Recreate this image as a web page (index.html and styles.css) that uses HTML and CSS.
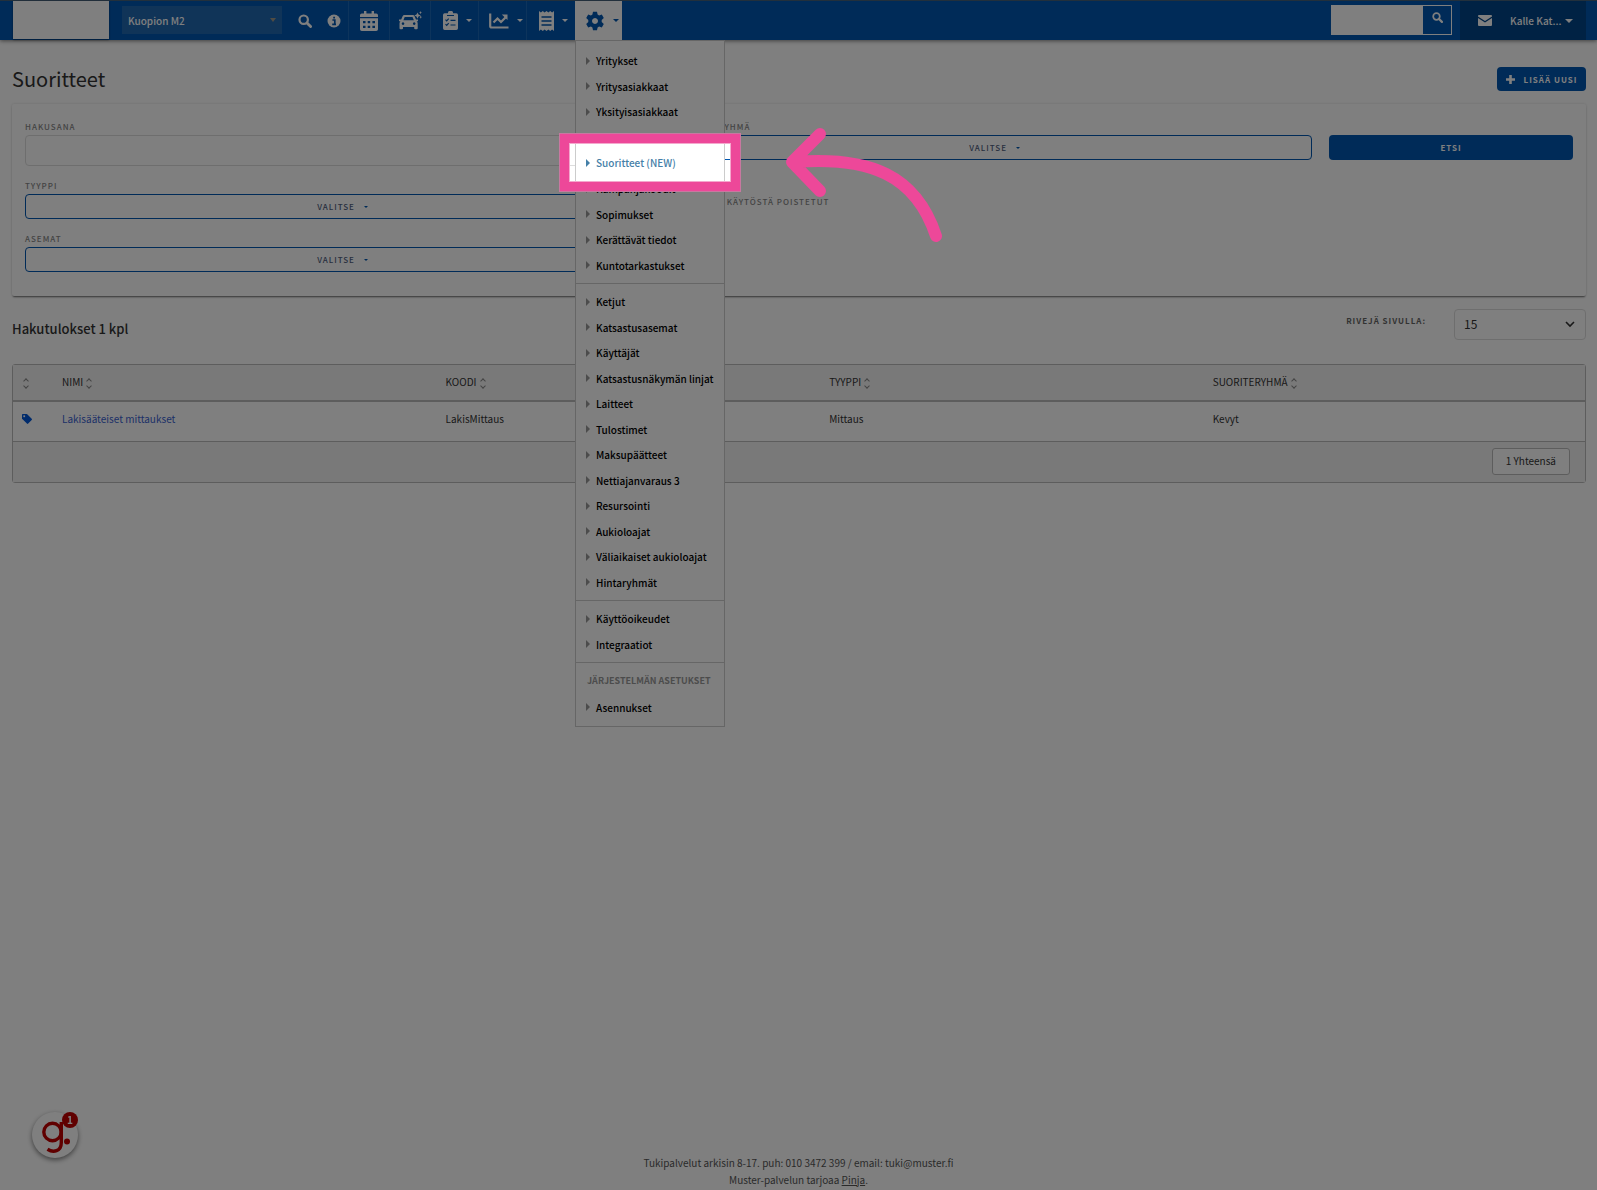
FILE: index.html
```html
<!DOCTYPE html>
<html lang="fi">
<head>
<meta charset="utf-8">
<meta name="viewport" content="width=device-width, initial-scale=1">
<title>Suoritteet</title>
<link rel="stylesheet" href="styles.css">
</head>
<body>
<header class="navbar">
  <a class="logo" href="#" aria-label="Etusivu"></a>
  <button class="station" type="button">Kuopion M2 <span class="caret caret-grey"></span></button>
  <nav class="nav">
    <a class="nav-plain" href="#" aria-label="Haku"><svg width="14" height="14" viewBox="0 0 14 14"><circle cx="5.7" cy="5.7" r="4.2" fill="none" stroke="currentColor" stroke-width="2.2"/><path d="M9 9l3.6 3.6" stroke="currentColor" stroke-width="2.8" stroke-linecap="round"/></svg></a>
    <a class="nav-plain" href="#" aria-label="Tietoja"><svg width="14" height="14" viewBox="0 0 14 14"><circle cx="7" cy="7" r="6.5" fill="currentColor"/><path d="M5.4 6h2.400v4M5.200 10.300h3.800M6.200 3.600h1.800" fill="none" stroke="#0056b0" stroke-width="1.700"/></svg></a>
    <a class="nav-item" href="#" aria-label="Kalenteri"><svg width="18" height="20" viewBox="0 0 18 20"><path fill="currentColor" fill-rule="evenodd" d="M4 0h2.4v2.4h5.2V0H14v2.4h2.200a1.800 1.800 0 0 1 1.800 1.800V6H0V4.200a1.800 1.800 0 0 1 1.800-1.800H4zM0 7.300h18v10.900a1.800 1.800 0 0 1-1.800 1.800H1.800A1.800 1.800 0 0 1 0 18.200zM3 10v2.300h2.500V10zm4.700 0v2.300h2.500V10zm4.700 0v2.300H15V10zM3 14.700V17h2.500v-2.300zm4.700 0V17h2.500v-2.300zm4.700 0V17H15v-2.300z"/></svg></a>
    <a class="nav-item" href="#" aria-label="Ajoneuvot"><svg width="23" height="20" viewBox="0 0 23 20"><path fill="currentColor" fill-rule="evenodd" d="M5.500 4h8.200a2 2 0 0 1 1.900 1.300L17 8.600h2v1.600h-1.300a3 3 0 0 1 1 2.300v4.800a1 1 0 0 1-1 1h-1.500a1 1 0 0 1-1-1V16H4v1.300a1 1 0 0 1-1 1H1.500a1 1 0 0 1-1-1v-4.800a3 3 0 0 1 1-2.300H0V8.600h2.200l1.400-3.300A2 2 0 0 1 5.500 4zm.2 1.900L4.400 9.300h10.500l-1.400-3.400zM4 11.300a1.300 1.300 0 1 0 .01 0zm11.200 0a1.300 1.300 0 1 0 .01 0z"/><path d="M18.500 1.400l1 2.200 2.200 1-2.200 1-1 2.200-1-2.200-2.200-1 2.200-1zM21.500 0l.5 1.200 1 .4-1 .400-.5 1.200-.5-1.200-1-.4 1-.4zM21.700 4.500l.5 1.200.8.400-.8.400-.5 1.200-.5-1.200-.9-.4.900-.4z" fill="currentColor"/></svg></a>
    <button class="nav-item wide" type="button" aria-label="Tehtävät"><svg width="15" height="19" viewBox="0 0 15 19"><path fill="currentColor" d="M1.700 2.300h3.200a2.600 2.600 0 0 1 5.200 0h3.200A1.700 1.700 0 0 1 15 4v13.300a1.700 1.700 0 0 1-1.700 1.700H1.700A1.700 1.700 0 0 1 0 17.300V4a1.700 1.700 0 0 1 1.700-1.700z"/><path d="M4 4.500h7M2.500 8.700l1.200 1.200 2-2.200M2.500 13.200l1.200 1.200 2-2.200M7.500 9.300h5M7.500 14h5" fill="none" stroke="#0056b0" stroke-width="1.200"/></svg><span class="caret"></span></button>
    <button class="nav-item wide" type="button" aria-label="Raportit"><svg width="20" height="16" viewBox="0 0 20 16"><path d="M1.200 0.500v12.700a1.300 1.300 0 0 0 1.300 1.300H19.500" fill="none" stroke="currentColor" stroke-width="2.200"/><path d="M4.500 9.500l4-4 3.500 3.500 4.500-4.500" fill="none" stroke="currentColor" stroke-width="2.200"/><path d="M12.800 1.400h5.700v5.700z" fill="currentColor"/></svg><span class="caret"></span></button>
    <button class="nav-item wide" type="button" aria-label="Kuitit"><svg width="15" height="20" viewBox="0 0 15 20"><path fill="currentColor" d="M0 0l1.900 1.500L3.800 0l1.800 1.500L7.500 0l1.900 1.500L11.200 0l1.900 1.500L15 0v20l-1.900-1.500-1.900 1.500-1.800-1.500L7.500 20l-1.900-1.500L3.800 20l-1.900-1.500L0 20z"/><path d="M2.500 6h10M2.500 10h10M2.500 14h10" stroke="#0056b0" stroke-width="1.300"/></svg><span class="caret"></span></button>
    <div class="nav-open">
      <button class="nav-item wide active" type="button" aria-label="Asetukset" aria-expanded="true"><svg width="20" height="20" viewBox="0 0 20 20"><path fill="currentColor" fill-rule="evenodd" d="M8 .8h4l.6 2.700 1.500.9 2.700-.9 2 3.500-2.100 1.900v2.200l2.100 1.900-2 3.500-2.700-.9-1.500.9-.6 2.700H8l-.6-2.700-1.500-.9-2.700.9-2-3.500 2.100-1.900V8.900L1.200 7l2-3.500 2.700.9 1.500-.9zM10 7a3 3 0 1 0 .01 0z"/></svg><span class="caret"></span></button>
      <div class="menu">
        <ul class="menu-list nine">
          <li><a href="#">Yritykset</a></li>
          <li><a href="#">Yritysasiakkaat</a></li>
          <li><a href="#">Yksityisasiakkaat</a></li>
          <li><a href="#">Alennushinnastot</a></li>
          <li><a class="current" href="#">Suoritteet (NEW)</a></li>
          <li><a href="#">Kampanjakoodit</a></li>
          <li><a href="#">Sopimukset</a></li>
          <li><a href="#">Kerättävät tiedot</a></li>
          <li><a href="#">Kuntotarkastukset</a></li>
        </ul>
        <ul class="menu-list twelve">
          <li><a href="#">Ketjut</a></li>
          <li><a href="#">Katsastusasemat</a></li>
          <li><a href="#">Käyttäjät</a></li>
          <li><a href="#">Katsastusnäkymän linjat</a></li>
          <li><a href="#">Laitteet</a></li>
          <li><a href="#">Tulostimet</a></li>
          <li><a href="#">Maksupäätteet</a></li>
          <li><a href="#">Nettiajanvaraus 3</a></li>
          <li><a href="#">Resursointi</a></li>
          <li><a href="#">Aukioloajat</a></li>
          <li><a href="#">Väliaikaiset aukioloajat</a></li>
          <li><a href="#">Hintaryhmät</a></li>
        </ul>
        <ul class="menu-list two">
          <li><a href="#">Käyttöoikeudet</a></li>
          <li><a href="#">Integraatiot</a></li>
        </ul>
        <h2 class="menu-title">Järjestelmän asetukset</h2>
        <ul class="menu-list one">
          <li><a href="#">Asennukset</a></li>
        </ul>
      </div>
    </div>
  </nav>
  <form class="quick">
    <input type="text" aria-label="Pikahaku">
    <button type="button" aria-label="Hae"><svg width="11" height="11" viewBox="0 0 14 14"><circle cx="5.700" cy="5.700" r="4.200" fill="none" stroke="currentColor" stroke-width="2.200"/><path d="M9 9l3.600 3.600" stroke="currentColor" stroke-width="2.800" stroke-linecap="round"/></svg></button>
  </form>
  <div class="user">
    <svg width="14" height="11" viewBox="0 0 14 11"><path fill="currentColor" d="M1 0h12a1 1 0 0 1 1 1v.6L7 6 0 1.600V1a1 1 0 0 1 1-1zM0 3l7 4.400L14 3v7a1 1 0 0 1-1 1H1a1 1 0 0 1-1-1z"/></svg>
    <button type="button">Kalle Kat... <span class="caret caret-big"></span></button>
  </div>
</header>

<main class="page">
  <div class="heading">
    <h1>Suoritteet</h1>
    <button class="btn add" type="button"><svg width="9" height="9" viewBox="0 0 9 9"><path d="M4.500 0v9M0 4.500h9" stroke="currentColor" stroke-width="2.600"/></svg>Lisää uusi</button>
  </div>

  <form class="filters">
    <div class="field span5"><label for="q">Hakusana</label><input id="q" type="text"></div>
    <div class="field span5"><label for="group">Suoriteryhmä</label><button class="pick" id="group" type="button">Valitse <span class="caret"></span></button></div>
    <div class="field span2"><button class="btn search" type="button">Etsi</button></div>
    <div class="field span5"><label for="type">Tyyppi</label><button class="pick" id="type" type="button">Valitse <span class="caret"></span></button></div>
    <div class="field span5"><label class="removed"><input type="checkbox">Myös käytöstä poistetut</label></div>
    <div class="field span5 first"><label for="stations">Asemat</label><button class="pick" id="stations" type="button">Valitse <span class="caret"></span></button></div>
  </form>

  <div class="results-bar">
    <h2>Hakutulokset 1 kpl</h2>
    <label for="rows">Rivejä sivulla:</label>
    <div class="select"><select id="rows"><option>15</option></select><svg width="10" height="7" viewBox="0 0 10 7"><path d="M1 1l4 4 4-4" fill="none" stroke="currentColor" stroke-width="1.600"/></svg></div>
  </div>

  <div class="grid">
    <table>
      <thead><tr>
        <th class="narrow"><span class="sort"></span></th><th class="col">Nimi <span class="sort"></span></th><th class="col">Koodi <span class="sort"></span></th><th class="col">Tyyppi <span class="sort"></span></th><th>Suoriteryhmä <span class="sort"></span></th>
      </tr></thead>
      <tbody><tr>
        <td class="narrow"><svg width="10" height="10" viewBox="0 0 10 10"><path fill="#0057d8" fill-rule="evenodd" d="M.8 0h3.700a1 1 0 0 1 .7.300l4.500 4.500a1 1 0 0 1 0 1.300L6.200 9.600a1 1 0 0 1-1.300 0L.3 5.100A1 1 0 0 1 0 4.400V.8A.8.800 0 0 1 .8 0zM2.200 1.300a.9.900 0 1 0 .01 0z"/></svg></td>
        <td><a href="#">Lakisääteiset mittaukset</a></td><td>LakisMittaus</td><td>Mittaus</td><td>Kevyt</td>
      </tr></tbody>
    </table>
    <div class="total"><span>1 Yhteensä</span></div>
  </div>
</main>

<footer class="footer">
  <p>Tukipalvelut arkisin 8-17. puh: 010 3472 399 / email: tuki@muster.fi</p>
  <p>Muster-palvelun tarjoaa <a href="#">Pinja</a>.</p>
</footer>

<button class="chat" type="button" aria-label="Ohje"><svg width="30" height="34" viewBox="0 0 30 34"><circle cx="10.500" cy="11" r="8.700" fill="none" stroke="currentColor" stroke-width="3.400"/><path d="M19.300 1v20.500c0 9-8 10.500-13.800 6.800" fill="none" stroke="currentColor" stroke-width="3.400"/><circle cx="25" cy="20.500" r="3" fill="currentColor"/></svg><span>1</span></button>

<div class="spotlight"></div>
<svg class="arrow" width="160" height="120" viewBox="0 0 160 120"><path d="M34 9L6 37l28 29M8 37C84 31 130 50 150 111" fill="none" stroke="#ed4899" stroke-width="12" stroke-linecap="round" stroke-linejoin="round"/></svg>
</body>
</html>
```
FILE: styles.css
```css
* { box-sizing: border-box; }

body {
  margin: 0;
  min-height: 100vh;
  display: flex;
  flex-direction: column;
  background: #fff;
  color: #333;
  font-family: "Noto Sans CJK SC", "Noto Sans", sans-serif;
  font-size: 10px;
  line-height: 17px;
  overflow-x: hidden;
}

button, input, select { font: inherit; color: inherit; margin: 0; padding: 0; border: 0; background: none; }
a { color: inherit; text-decoration: none; }
h1, h2, p, ul { margin: 0; padding: 0; }
ul { list-style: none; }
svg { display: block; flex: none; }

.caret {
  display: inline-block;
  border: 3px solid transparent;
  border-top-color: currentColor;
  border-bottom: 0;
}
.caret-grey { border-width: 4px 3px 0; color: #a09888; }
.caret-big { border-width: 4px 4px 0; vertical-align: middle; }

/* top bar */
.navbar {
  display: flex;
  height: 40px;
  padding: 0 11px 0 13px;
  border-top: 1px solid #456078;
  background: #0056b0;
  color: #fff;
  box-shadow: 0 1px 4px rgba(0, 0, 0, .5);
}
.logo { width: 96px; height: 38px; background: #fff; box-shadow: 0 1px 2px rgba(0, 0, 0, .4); }
.station {
  display: flex;
  align-items: center;
  justify-content: space-between;
  width: 160px;
  height: 28px;
  margin: 5px 0 0 13px;
  padding: 0 6px;
  background: #2068b0;
  font-weight: 500;
}
.nav { display: flex; margin-left: 8px; }
.nav-plain { display: flex; align-items: center; justify-content: center; width: 29px; }
.nav-item {
  display: flex;
  align-items: center;
  justify-content: center;
  width: 41px;
  height: 39px;
  border-left: 1px solid #1a68b8;
}
.wide { width: 48px; gap: 8px; padding-left: 6px; }
.nav-open { position: relative; margin-left: 1px; }
.active { width: 47px; background: #fff; color: #0056b0; border-left: 0; }

.menu {
  position: absolute;
  top: 39px;
  left: 0;
  width: 150px;
  padding: 2px 0 6px;
  border: 1px solid #ccc;
  background: #fff;
  color: #000;
  font-weight: 500;
}
.menu-list { display: grid; grid-auto-rows: 1fr; padding: 5px 0; border-bottom: 1px solid #ccc; }
.nine { height: 241px; }
.twelve { height: 317px; }
.two { height: 62px; }
.one { height: 26px; padding: 0; border: 0; }
.menu-list li { display: flex; align-items: center; }
.menu-list a { display: flex; align-items: center; gap: 6px; padding-left: 10px; white-space: nowrap; }
.menu-list a::before {
  content: "";
  border: 4px solid transparent;
  border-left-color: #999;
  border-right: 0;
}
.menu-list .current { color: #4580a8; }
.menu-list .current::before { border-left-color: #4580a8; }
.menu-title { padding: 10px 11px 6px; font-size: 9px; line-height: 15px; font-weight: 700; color: #999; text-transform: uppercase; white-space: nowrap; }

.quick { display: flex; width: 121px; height: 30px; margin: 4px 8px 0 auto; border: 1px solid #fff; }
.quick input { flex: 1; min-width: 0; background: #fff; }
.quick button { display: flex; justify-content: center; width: 28px; padding-top: 6px; }
.user { display: flex; align-items: center; gap: 18px; width: 126px; padding-left: 18px; background: #004488; font-weight: 500; }
.user button { display: flex; align-items: center; gap: 4px; }

/* page */
.page { padding: 27px 11px 0 12px; }
.heading { display: flex; justify-content: space-between; }
h1 { font-size: 20px; line-height: 24px; font-weight: 400; }
.btn {
  display: flex;
  align-items: center;
  justify-content: center;
  height: 25px;
  border-radius: 4px;
  background: #0056b0;
  color: #fff;
  font-size: 8px;
  font-weight: 700;
  letter-spacing: 1px;
  text-transform: uppercase;
}
.add { width: 89px; height: 24px; gap: 9px; }

.filters {
  display: grid;
  grid-template-columns: repeat(12, 1fr);
  column-gap: 17px;
  margin-top: 13px;
  padding: 15px 13px 24px;
  border-radius: 2px;
  box-shadow: 0 2px 2px -1px rgba(0, 0, 0, .55), 0 0 3px rgba(0, 0, 0, .15);
}
.span5 { grid-column: span 5; }
.span2 { grid-column: span 2; }
.first { grid-column: 1 / span 5; }
.field label, .results-bar label {
  display: block;
  color: #888;
  font-size: 8px;
  line-height: 16px;
  letter-spacing: 1px;
  font-weight: 500;
  text-transform: uppercase;
}
.field input[type="text"] { display: block; width: 100%; height: 31px; border: 1px solid #ddd; border-radius: 4px; padding: 0 8px; }
.field { padding-bottom: 12px; }
.first { padding-bottom: 0; }
.pick {
  display: flex;
  align-items: center;
  justify-content: center;
  gap: 9px;
  width: 100%;
  height: 25px;
  border: 1px solid #0056b0;
  border-radius: 4px;
  color: #506080;
  font-size: 8px;
  font-weight: 500;
  letter-spacing: 1px;
  text-transform: uppercase;
}
.pick .caret { border-width: 2px 2px 0; color: #0056b0; }
.search { width: 100%; margin-top: 16px; }
.field .removed { display: flex; align-items: center; gap: 8px; height: 41px; padding-top: 7px; }

.results-bar { display: flex; margin-top: 13px; }
h2 { font-size: 13px; line-height: 40px; font-weight: 500; }
.results-bar label { margin: 4px 28px 0 auto; font-weight: 700; color: #666; }
.select { display: flex; align-items: center; width: 132px; height: 31px; padding-right: 10px; border: 1px solid #ddd; border-radius: 4px; }
.select select { flex: 1; padding: 0 0 2px 9px; appearance: none; font-size: 12px; }

.grid { margin-top: 15px; border: 1px solid #bbb; border-radius: 3px; }
table { width: 100%; border-collapse: collapse; table-layout: fixed; }
th, td { padding: 0; text-align: left; font-weight: 400; }
th { height: 36px; padding-bottom: 2px; background: #f2f2f2; border-bottom: 2px solid #bbb; text-transform: uppercase; }
td { height: 40px; padding-bottom: 6px; }
.narrow { width: 49px; padding-left: 9px; }
.col { width: 24.4%; }
td a { color: #3a62d0; }
.sort { display: inline-flex; flex-direction: column; gap: 1px; margin-left: 2px; vertical-align: middle; }
.sort::before, .sort::after { content: ""; width: 3px; height: 3px; border: solid #888; border-width: 1px 0 0 1px; transform: rotate(45deg); }
.sort::after { transform: rotate(225deg); }
.total { display: flex; justify-content: flex-end; padding: 6px 15px 7px; background: #f2f2f2; border-top: 1px solid #bbb; }
.total span { padding: 3px 13px 5px; border: 1px solid #bbb; border-radius: 3px; background: #fff; }

.footer { margin-top: auto; padding-bottom: 2px; text-align: center; color: #555; }
.footer a { text-decoration: underline; }

/* floating help button */
.chat {
  position: fixed;
  left: 32px;
  bottom: 32px;
  width: 46px;
  height: 46px;
  border-radius: 50%;
  background: #fff;
  color: #c00000;
  box-shadow: 0 2px 5px rgba(0, 0, 0, .5);
}
.chat svg { margin: 6px 0 0 10px; }
.chat span {
  position: absolute;
  top: 0;
  right: 0;
  width: 16px;
  height: 16px;
  border-radius: 50%;
  background: #c00000;
  color: #fff;
  font-size: 10px;
  line-height: 16px;
  font-weight: 700;
}

/* guided tour */
.spotlight {
  position: absolute;
  top: 143px;
  left: 569px;
  width: 162px;
  height: 39px;
  outline: 9px solid #ed4899;
  box-shadow: inset 0 0 0 1px #f4a8cd, 0 0 0 10px #c878a0, 0 0 0 2000px rgba(0, 0, 0, .5);
}
.arrow { position: absolute; top: 125px; left: 786px; }
```
